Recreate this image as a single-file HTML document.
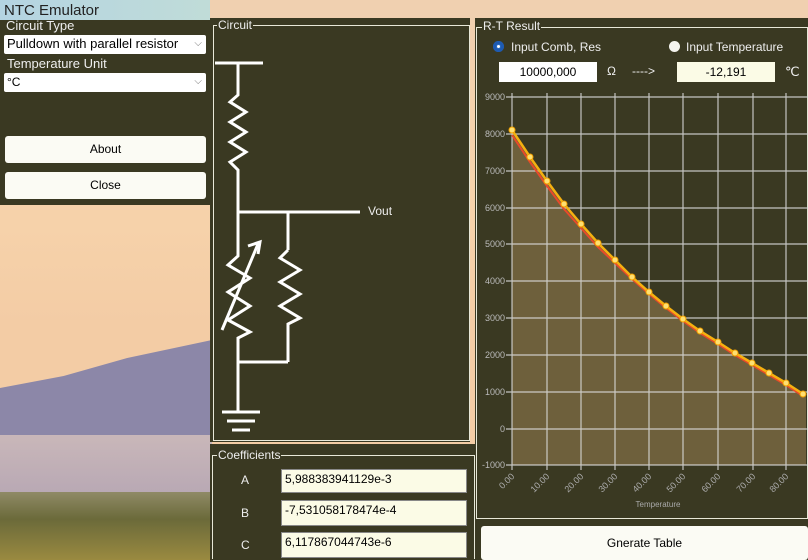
<!DOCTYPE html><html><head><meta charset="utf-8"><style>
html{width:808px;height:560px;overflow:hidden}
body{margin:0;width:808px;height:560px;overflow:hidden;position:relative;font-family:"Liberation Sans",sans-serif;background:#f3cfa6}
.bg{position:absolute;left:0;top:0;width:808px;height:560px;background:linear-gradient(#f0d0b0 0%,#f6d2aa 40%,#f3cca5 58%)}
.hill{position:absolute;left:0;top:340px;width:212px;height:120px;background:#8c87a8;clip-path:polygon(0 40%,30% 30%,60% 15%,100% 0,100% 100%,0 100%)}
.mist{position:absolute;left:0;top:435px;width:212px;height:60px;background:linear-gradient(#c9b7b9,#b8a8b4)}
.trees{position:absolute;left:0;top:492px;width:212px;height:68px;background:linear-gradient(#8f8a66,#6b6a3a 40%,#9a8a40)}
.p{position:absolute;background:#3a3922}
.gb{position:absolute;border:1px solid #e8e8d8}
.gl{position:absolute;color:#eee;font-size:12px;background:#3a3922;padding:0 1px;line-height:12px}
.sel{position:absolute;background:#fff;font-size:12px;color:#000;line-height:18px;padding-left:3px;box-sizing:border-box;border-radius:2px}
.sel span{position:absolute;right:4px;top:0;color:#777;font-size:10px}
.btn{position:absolute;background:#fbfbf4;border-radius:3px;font-size:12px;text-align:center;color:#000}
.lbl{position:absolute;color:#eee;font-size:12px}
.tb{position:absolute;background:#fbfbe6;border:1px solid #888;font-size:12px;color:#000;box-sizing:border-box;padding-left:3px;line-height:18px}
</style></head><body>
<div class="bg"></div><div class="hill"></div><div class="mist"></div><div class="trees"></div>
<div style="position:absolute;left:0;top:0;width:210px;height:20px;background:linear-gradient(90deg,#b4d4e2,#c0dcd8)"></div>
<div style="position:absolute;left:4px;top:3px;font-size:15px;color:#222;line-height:15px">NTC Emulator</div>
<div class="p" style="left:0;top:20px;width:210px;height:185px"></div>
<div class="lbl" style="left:6px;top:18px;font-size:13px">Circuit Type</div>
<div class="sel" style="left:4px;top:35px;width:202px;height:19px;font-size:13px">Pulldown with parallel resistor<span>⌵</span></div>
<div class="lbl" style="left:7px;top:56px;font-size:13px">Temperature Unit</div>
<div class="sel" style="left:4px;top:73px;width:202px;height:19px">°C<span>⌵</span></div>
<div class="btn" style="left:5px;top:136px;width:201px;height:27px;line-height:27px">About</div>
<div class="btn" style="left:5px;top:172px;width:201px;height:27px;line-height:27px">Close</div>

<div class="p" style="left:210px;top:18px;width:260px;height:424px"></div>
<div class="gb" style="left:213px;top:25px;width:255px;height:414px"></div>
<div class="gl" style="left:217px;top:19px">Circuit</div>
<svg style="position:absolute;left:210px;top:40px" width="200" height="400" stroke="#fff" stroke-width="3" fill="none">
<line x1="5" y1="23" x2="53" y2="23"/>
<polyline points="28,23 28,55 20,62 36,72 20,82 36,92 20,102 36,112 20,122 28,130 28,212"/>
<line x1="28" y1="172" x2="150" y2="172"/>
<line x1="78" y1="172" x2="78" y2="210"/>
<polyline points="28,212 28,216 18,225 40,238 18,252 40,266 18,280 40,292 28,298 28,322"/>
<polyline points="78,210 70,218 90,230 70,242 90,254 70,266 90,278 78,284 78,322"/>
<line x1="12" y1="290" x2="48" y2="204"/><polyline points="38,206 50,202 48,214"/>
<line x1="28" y1="322" x2="78" y2="322"/>
<line x1="28" y1="322" x2="28" y2="372"/>
<line x1="12" y1="372" x2="50" y2="372"/><line x1="17" y1="381" x2="45" y2="381"/><line x1="22" y1="390" x2="40" y2="390"/>
</svg>
<div class="lbl" style="left:368px;top:204px">Vout</div>

<div class="p" style="left:210px;top:444px;width:265px;height:116px"></div>
<div class="gb" style="left:212px;top:455px;width:261px;height:103px;border-bottom:none"></div>
<div class="gl" style="left:217px;top:449px">Coefficients</div>
<div class="lbl" style="left:241px;top:473px">A</div>
<div class="lbl" style="left:241px;top:506px">B</div>
<div class="lbl" style="left:241px;top:538px">C</div>
<div class="tb" style="left:281px;top:469px;width:186px;height:24px">5,988383941129e-3</div>
<div class="tb" style="left:281px;top:500px;width:186px;height:26px">-7,531058178474e-4</div>
<div class="tb" style="left:281px;top:532px;width:186px;height:26px">6,117867044743e-6</div>

<div class="p" style="left:475px;top:18px;width:333px;height:504px"></div>
<div class="gb" style="left:476px;top:27px;width:330px;height:490px"></div>
<div class="gl" style="left:482px;top:20px">R-T Result</div>
<div style="position:absolute;left:493px;top:41px;width:11px;height:11px;border-radius:50%;background:#2a6cc0;box-shadow:inset 0 0 0 3px #1e5ab0"><div style="position:absolute;left:4px;top:4px;width:3px;height:3px;background:#fff;border-radius:50%"></div></div>
<div class="lbl" style="left:511px;top:40px">Input Comb, Res</div>
<div style="position:absolute;left:669px;top:41px;width:11px;height:11px;border-radius:50%;background:#f4f4ee"></div>
<div class="lbl" style="left:686px;top:40px">Input Temperature</div>
<div style="position:absolute;left:499px;top:62px;width:98px;height:20px;background:#fff;font-size:12px;text-align:center;line-height:20px">10000,000</div>
<div class="lbl" style="left:607px;top:64px">Ω</div>
<div class="lbl" style="left:632px;top:64px">----&gt;</div>
<div style="position:absolute;left:677px;top:62px;width:98px;height:20px;background:#fbfbe6;font-size:12px;text-align:center;line-height:20px">-12,191</div>
<div class="lbl" style="left:785px;top:64px;font-size:13px">℃</div>
<svg style="position:absolute;left:476px;top:85px" width="332" height="430" font-family="Liberation Sans" font-size="9" fill="#bbb">
<g transform="translate(-476,-85)">
<polygon fill="#6e603c" points="512,131 530,158 547,182 564,205 581,225 598,244 615,261 632,278 649,293 666,307 683,320 700,332 718,343 735,354 752,364 769,374 786,384 803,395 806,395 806,465 512,465"/>
<g stroke="#ddd" stroke-width="1.2" opacity="0.85">
<line x1="506" x2="808" y1="97" y2="97"/><line x1="506" x2="808" y1="134" y2="134"/><line x1="506" x2="808" y1="171" y2="171"/><line x1="506" x2="808" y1="208" y2="208"/><line x1="506" x2="808" y1="244" y2="244"/><line x1="506" x2="808" y1="281" y2="281"/><line x1="506" x2="808" y1="318" y2="318"/><line x1="506" x2="808" y1="355" y2="355"/><line x1="506" x2="808" y1="392" y2="392"/><line x1="506" x2="808" y1="429" y2="429"/><line x1="506" x2="808" y1="465" y2="465"/>
<line y1="93" y2="470" x1="512" x2="512"/><line y1="93" y2="470" x1="547" x2="547"/><line y1="93" y2="470" x1="581" x2="581"/><line y1="93" y2="470" x1="615" x2="615"/><line y1="93" y2="470" x1="649" x2="649"/><line y1="93" y2="470" x1="683" x2="683"/><line y1="93" y2="470" x1="718" x2="718"/><line y1="93" y2="470" x1="753" x2="753"/><line y1="93" y2="470" x1="786" x2="786"/>
</g>
<g text-anchor="end"><text x="505" y="100">9000</text><text x="505" y="137">8000</text><text x="505" y="174">7000</text><text x="505" y="211">6000</text><text x="505" y="247">5000</text><text x="505" y="284">4000</text><text x="505" y="321">3000</text><text x="505" y="358">2000</text><text x="505" y="395">1000</text><text x="505" y="432">0</text><text x="505" y="468">-1000</text></g>
<polyline fill="none" stroke="#e84a2a" stroke-width="2" points="512,135 530,162 547,186 564,209 581,228 598,247 615,263 632,279 649,294 666,308 683,321 700,333 718,344 735,355 752,365 769,375 786,385 803,396"/>
<polyline fill="none" stroke="#f5b010" stroke-width="2.5" points="512,130 530,157 547,181 564,204 581,224 598,243 615,260 632,277 649,292 666,306 683,319 700,331 718,342 735,353 752,363 769,373 786,383 803,394"/>
<g fill="#ffe070" stroke="#f0a000" stroke-width="1"><circle cx="512" cy="130" r="3"/><circle cx="530" cy="157" r="3"/><circle cx="547" cy="181" r="3"/><circle cx="564" cy="204" r="3"/><circle cx="581" cy="224" r="3"/><circle cx="598" cy="243" r="3"/><circle cx="615" cy="260" r="3"/><circle cx="632" cy="277" r="3"/><circle cx="649" cy="292" r="3"/><circle cx="666" cy="306" r="3"/><circle cx="683" cy="319" r="3"/><circle cx="700" cy="331" r="3"/><circle cx="718" cy="342" r="3"/><circle cx="735" cy="353" r="3"/><circle cx="752" cy="363" r="3"/><circle cx="769" cy="373" r="3"/><circle cx="786" cy="383" r="3"/><circle cx="803" cy="394" r="3"/></g>
<g fill="#aaa" font-size="9"><text transform="translate(515,477) rotate(-45)" text-anchor="end">0.00</text><text transform="translate(550,477) rotate(-45)" text-anchor="end">10.00</text><text transform="translate(584,477) rotate(-45)" text-anchor="end">20.00</text><text transform="translate(618,477) rotate(-45)" text-anchor="end">30.00</text><text transform="translate(652,477) rotate(-45)" text-anchor="end">40.00</text><text transform="translate(686,477) rotate(-45)" text-anchor="end">50.00</text><text transform="translate(721,477) rotate(-45)" text-anchor="end">60.00</text><text transform="translate(756,477) rotate(-45)" text-anchor="end">70.00</text><text transform="translate(789,477) rotate(-45)" text-anchor="end">80.00</text>
<text x="658" y="507" text-anchor="middle" font-size="8">Temperature</text></g>
</g></svg>
<div class="p" style="left:475px;top:522px;width:333px;height:38px"></div>
<div class="btn" style="left:481px;top:526px;width:327px;height:34px;line-height:34px">Gnerate Table</div>
</body></html>
